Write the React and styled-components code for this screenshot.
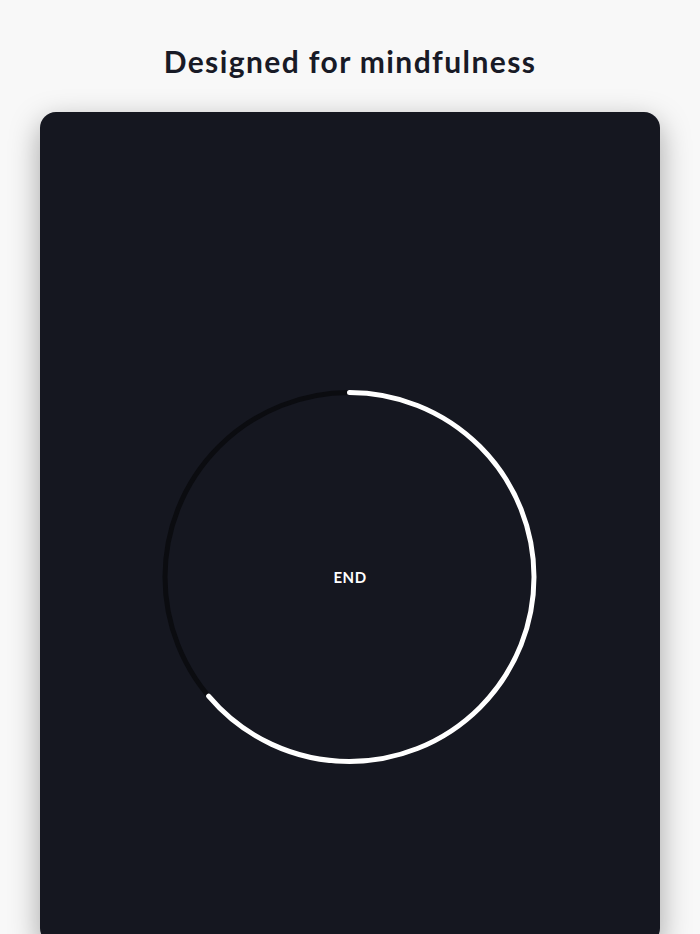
import styled, { createGlobalStyle } from 'styled-components';

const GlobalStyle = createGlobalStyle`
  html, body {
    margin: 0;
    padding: 0;
    background: #f8f8f8;
    overflow: hidden;
  }
  body {
    font-family: Lato, "Noto Sans", sans-serif;
  }
`;

const Page = styled.div`
  width: 700px;
  height: 934px;
  display: flex;
  flex-direction: column;
  align-items: center;
  overflow: hidden;
`;

const Title = styled.h1`
  margin: 43px 0 0;
  height: 36px;
  font-size: 30px;
  line-height: 36px;
  font-weight: 700;
  letter-spacing: 1.4px;
  color: #181a26;
`;

const Card = styled.div`
  margin-top: 33px;
  width: 620px;
  height: 832px;
  flex-shrink: 0;
  border-radius: 16px;
  background: #151720;
  box-shadow: 0 10px 30px rgba(0, 0, 0, 0.35);
  display: flex;
  align-items: center;
  justify-content: center;
`;

const Timer = styled.div`
  position: relative;
  width: 380px;
  height: 380px;
  margin-top: 98px;
  display: flex;
  align-items: center;
  justify-content: center;
`;

const Ring = styled.svg`
  position: absolute;
  inset: 0;
`;

const Label = styled.button`
  position: relative;
  border: none;
  background: none;
  padding: 0;
  color: #ffffff;
  font-family: Lato, "Noto Sans", sans-serif;
  font-weight: 700;
  font-size: 15px;
  letter-spacing: 0.5px;
`;

const R = 184.5;
const C = 2 * Math.PI * R;

export default function App() {
  const progress = 0.638;
  return (
    <>
      <GlobalStyle />
      <Page>
        <Title>Designed for mindfulness</Title>
        <Card>
          <Timer>
            <Ring width="380" height="380" viewBox="0 0 380 380">
              <circle cx="189.5" cy="190" r={R} fill="none" stroke="#0b0c10" strokeWidth="5" />
              <circle
                cx="189.5"
                cy="190"
                r={R}
                fill="none"
                stroke="#ffffff"
                strokeWidth="5"
                strokeLinecap="round"
                strokeDasharray={`${C * progress} ${C}`}
                transform="rotate(-90 189.5 190)"
              />
            </Ring>
            <Label>END</Label>
          </Timer>
        </Card>
      </Page>
    </>
  );
}
